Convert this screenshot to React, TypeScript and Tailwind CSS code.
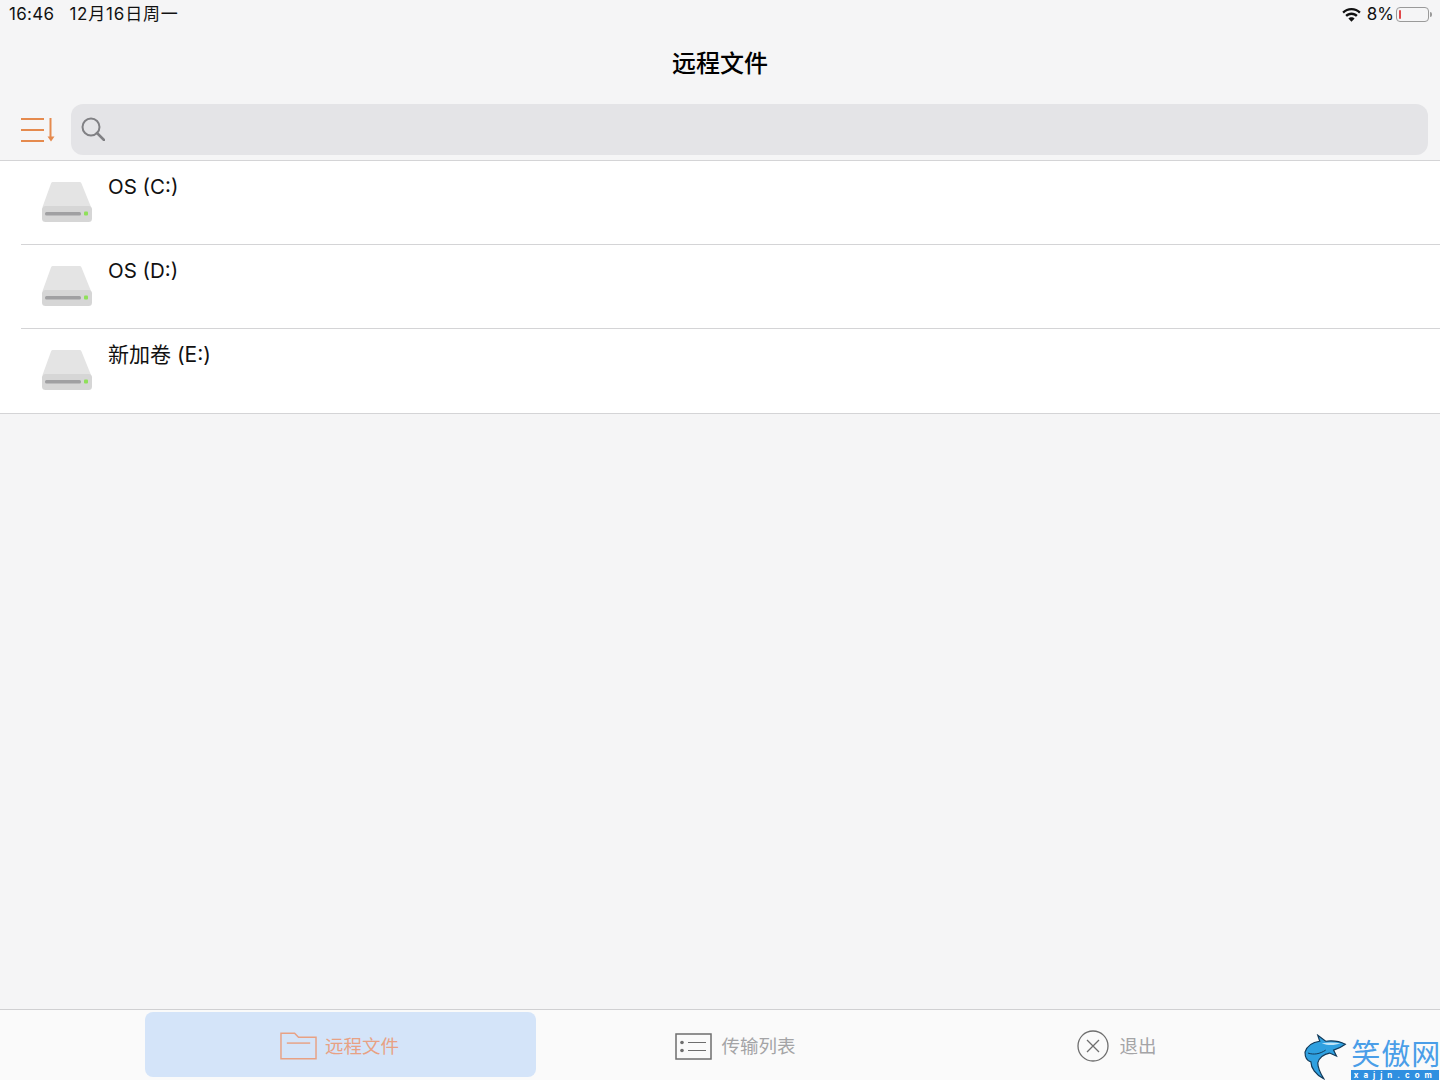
const FONT = "font-['Inter','Noto_Sans_CJK_SC',sans-serif]";

const DRIVES = ['OS (C:)', 'OS (D:)', '新加卷 (E:)'];

function DriveIcon() {
  return (
    <svg width="52" height="44" viewBox="0 0 52 44" fill="none">
      <path d="M10 2.500C10.400 1.200 11.200 1 12.500 1H38c1.400 0 2 .4 2.500 1.600L50 26H1.500z" fill="#e4e4e4" />
      <rect x="1" y="25" width="50" height="16" rx="3.500" fill="#d6d6d6" />
      <rect x="4" y="31" width="36" height="3.500" rx="1.500" fill="#a0a0a2" />
      <rect x="43" y="30.500" width="4" height="4" rx="1" fill="#8fe05a" />
    </svg>
  );
}

function SortIcon() {
  return (
    <svg width="36" height="26" viewBox="0 0 36 26" fill="none" stroke="#e58a4e" strokeWidth="2">
      <path d="M1 2h23M1 13h23M1 24h23" />
      <path d="M30.500 1v20" />
      <path d="M27.500 19.500h7l-3.500 5z" fill="#e58a4e" stroke="none" />
    </svg>
  );
}

function SearchIcon() {
  return (
    <svg width="24" height="24" viewBox="0 0 24 24" fill="none" stroke="#808084" strokeWidth="2">
      <circle cx="10" cy="10" r="8.500" />
      <path d="M16 16l7 7" strokeWidth="2.500" strokeLinecap="round" />
    </svg>
  );
}

function WifiIcon() {
  return (
    <svg width="19" height="14" viewBox="0 0 19 14" fill="#111">
      <path d="M9.500 0C5.900 0 2.700 1.400.3 3.700l1.600 1.700C3.900 3.500 6.600 2.300 9.500 2.300s5.600 1.200 7.600 3.100l1.600-1.700C16.300 1.400 13.100 0 9.500 0z" />
      <path d="M9.500 4.600c-2.400 0-4.600 1-6.200 2.500l1.600 1.700c1.200-1.100 2.800-1.900 4.600-1.900s3.400.8 4.600 1.900l1.600-1.700c-1.600-1.500-3.800-2.500-6.200-2.500z" />
      <path d="M9.500 9.200c-1.200 0-2.300.5-3.100 1.200l3.100 3.300 3.100-3.300c-.8-.7-1.900-1.200-3.100-1.200z" />
    </svg>
  );
}

function BatteryIcon() {
  return (
    <div className="flex items-center">
      <div className="w-[33px] h-[15px] rounded-[4px] border border-[#9a9a9a] p-[2px] flex">
        <div className="w-[2px] h-full rounded-[1px] bg-[#e0484a]" />
      </div>
      <div className="w-[2px] h-[5px] ml-[1px] rounded-r-[2px] bg-[#9a9a9a]" />
    </div>
  );
}

function FolderIcon() {
  return (
    <svg width="37" height="28" viewBox="0 0 38 28" fill="none" stroke="#e8a184" strokeWidth="1.500">
      <path d="M1 27V1h14l4 4h18v22z" />
      <path d="M7 11h24" />
    </svg>
  );
}

function ListIcon() {
  return (
    <svg width="37" height="27" viewBox="0 0 37 27" fill="none" stroke="#6e6e6e">
      <rect x="1" y="1" width="35" height="25" strokeWidth="1.500" />
      <circle cx="7" cy="9.500" r="1.800" fill="#6e6e6e" stroke="none" />
      <circle cx="7" cy="17.500" r="1.800" fill="#6e6e6e" stroke="none" />
      <path d="M13 9.500h18M13 17.500h18" strokeWidth="1.200" />
    </svg>
  );
}

function CloseIcon() {
  return (
    <svg width="32" height="32" viewBox="0 0 32 32" fill="none" stroke="#6e6e6e" strokeWidth="1.300">
      <circle cx="16" cy="16" r="15" />
      <path d="M10 10l12 12M22 10L10 22" />
    </svg>
  );
}

function SharkLogo() {
  return (
    <svg width="44" height="46" viewBox="0 0 44 46" fill="none">
      <path
        d="M14 1L22 7C29 6 36 7 42 10C38 13 33 15 30 16L33 22L26 19C20 20 15 24 14 29C14 35 17 40 20 45C12 41 7 34 7 28C3 27 1 23 1 18C3 12 8 8 16 7Z"
        fill="#2fa0e0"
        stroke="#123a5a"
        strokeWidth="1.200"
      />
      <path d="M4 19c6 2 12 1 18-3" stroke="#123a5a" strokeWidth="1" />
      <path d="M18 9c6-1 12-1 19 0-5 2-12 3-19 0z" fill="#bfe4f7" />
    </svg>
  );
}

export default function App() {
  return (
    <div className={`${FONT} relative h-[1080px] w-[1440px] overflow-hidden bg-[#f5f5f6] flex flex-col`}>
      {/* Status bar */}
      <div className="h-[28px] pl-[9px] pr-[8px] pt-[1px] flex items-center justify-between text-[17px] text-[#111]">
        <div className="flex gap-[15px]">
          <span className="tracking-[0.3px]">16:46</span>
          <span className="tracking-[0.8px]">12月16日周一</span>
        </div>
        <div className="flex items-center">
          <WifiIcon />
          <span className="ml-[6px] mr-[2px]">8%</span>
          <BatteryIcon />
        </div>
      </div>

      {/* Title */}
      <div className="h-[70px] pt-[2px] flex items-center justify-center text-[24px] font-medium text-black">
        远程文件
      </div>

      {/* Search row */}
      <div className="h-[63px] pl-[20px] pr-[12px] pt-[6px] flex items-start border-b border-[#d4d4d6]">
        <div className="w-[51px] h-[51px] flex items-center">
          <SortIcon />
        </div>
        <div className="flex-1 h-[51px] rounded-[12px] bg-[#e4e4e7] pl-[10px] pb-[2px] flex items-center">
          <SearchIcon />
        </div>
      </div>

      {/* Drive list */}
      <div className="bg-white border-b border-[#d4d4d6]">
        {DRIVES.map((name, i) => (
          <div key={name} className="pl-[21px]">
            <div className={`h-[84px] flex ${i < 2 ? 'border-b border-[#d4d4d6]' : ''}`}>
              <div className="ml-[20px] mt-[20px] w-[52px] shrink-0">
                <DriveIcon />
              </div>
              <div className={`ml-[15px] mt-[11px] leading-[30px] text-[#111] ${i === 2 ? 'text-[21px]' : 'text-[20.5px]'}`}>
                {name}
              </div>
            </div>
          </div>
        ))}
      </div>

      <div className="flex-1" />

      {/* Tab bar */}
      <div className="h-[71px] border-t border-[#d0d0d2] bg-[#fafafa] pl-[145px] pr-[122px] pt-[2px] grid grid-cols-[391px_391px_391px] text-[18.5px]">
        <div className="h-[65px] pt-[3px] pr-[2px] rounded-[8px] bg-[#d4e4f9] flex items-center justify-center gap-[8px] text-[#e8a184]">
          <FolderIcon />
          <span className="mt-[2px]">远程文件</span>
        </div>
        <div className="h-[65px] pt-[3px] pl-[8px] flex items-center justify-center gap-[9px] text-[#a4a4a6]">
          <ListIcon />
          <span className="mt-[2px]">传输列表</span>
        </div>
        <div className="h-[65px] pt-[3px] pr-[11px] flex items-center justify-center gap-[10px] text-[#a4a4a6]">
          <CloseIcon />
          <span className="mt-[2px]">退出</span>
        </div>
      </div>

      {/* Watermark */}
      <div className="absolute right-0 bottom-0 w-[136px] h-[46px] flex">
        <SharkLogo />
        <div className="ml-[4px] flex flex-col items-start overflow-hidden">
          <div className="h-[36px] whitespace-nowrap text-[29px] leading-[42px] tracking-[1px] text-[#4a9ee8]">笑傲网</div>
          <div className="w-[88px] h-[10px] bg-[#2f8fe0] text-white text-[8px] leading-[10px] tracking-[5px] text-center font-bold">xajjn.com</div>
        </div>
      </div>
    </div>
  );
}
